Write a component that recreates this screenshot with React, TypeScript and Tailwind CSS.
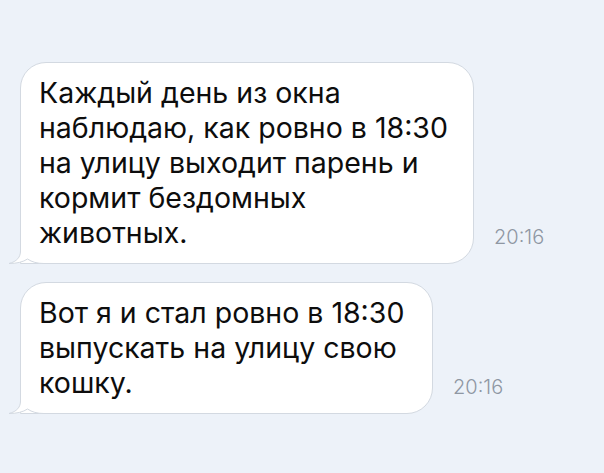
const messages = [
  {
    lines: ['Каждый день из окна', 'наблюдаю, как ровно в 18:30', 'на улицу выходит парень и', 'кормит бездомных', 'животных.'],
    time: '20:16',
    width: 'w-[454px]',
  },
  {
    lines: ['Вот я и стал ровно в 18:30', 'выпускать на улицу свою', 'кошку.'],
    time: '20:16',
    width: 'w-[413px]',
  },
];

function Tail() {
  return (
    <svg className="absolute left-[-13px] bottom-[-1px]" width="42" height="26" viewBox="0 0 42 26">
      <path d="M12.5 0 L12.5 13 C12.5 19 9 23.5 1 25.5 C9 25.5 15 24 19.5 21 C24 24 29 25.5 36 25.5 L42 25.5 L42 0 Z" fill="#ffffff" />
      <path d="M12.5 0 L12.5 13 C12.5 19 9 23.5 1 25.5 C9 25.5 15 24 19.5 21 C24 24 29 25.5 36 25.5 L42 25.5" fill="none" stroke="#d3d9e1" strokeWidth="1" />
    </svg>
  );
}

export default function App() {
  return (
    <div className="w-[604px] h-[473px] bg-[#edf2f9] pt-[62px] pl-[20px] flex flex-col gap-[18px] overflow-hidden" style={{ fontFamily: 'Inter, "Noto Sans", sans-serif' }}>
      {messages.map((m, i) => (
        <div key={i} className="flex items-end">
          <div className={`relative ${m.width} bg-white border border-[#d3d9e1] rounded-[26px] rounded-bl-none pl-[18px] pt-[12px] pb-[13px] text-[28.5px] leading-[35px] text-[#0d0d0d]`}>
            <Tail />
            <div className="relative z-10">
              {m.lines.map((l, j) => (
                <div key={j} className="whitespace-nowrap">{l}</div>
              ))}
            </div>
          </div>
          <div className="ml-[20px] mb-[12px] text-[20px] font-light text-[#8f97a3]">{m.time}</div>
        </div>
      ))}
    </div>
  );
}
